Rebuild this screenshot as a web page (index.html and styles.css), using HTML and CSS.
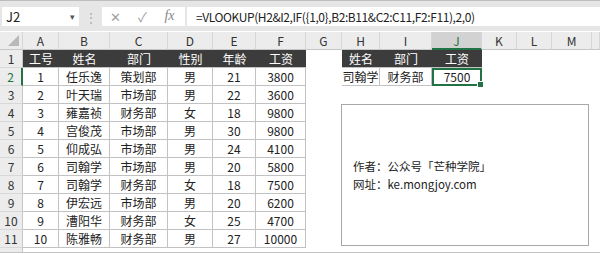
FILE: index.html
```html
<!DOCTYPE html>
<html lang="zh-CN">

<head>
    <meta charset="UTF-8">
    <title>VLOOKUP 多条件查找</title>
    <link rel="stylesheet" href="styles.css">
</head>

<body>
    <div class="window">
        <div class="formula-bar">
            <div class="name-box">
                <span>J2</span>
                <span class="caret">&#9662;</span>
            </div>
            <div class="grip">&#8942;</div>
            <div class="fx-buttons">
                <span class="btn">&#10005;</span>
                <span class="btn">&#10003;</span>
                <span class="btn fx">fx</span>
            </div>
            <div class="formula">=VLOOKUP(H2&amp;I2,IF({1,0},B2:B11&amp;C2:C11,F2:F11),2,0)</div>
        </div>

        <div class="sheet">
            <div class="row heads">
                <div class="corner"><span class="tri"></span></div>
                <div class="ch ca">A</div>
                <div class="ch cb">B</div>
                <div class="ch cc">C</div>
                <div class="ch cd">D</div>
                <div class="ch ce">E</div>
                <div class="ch cf">F</div>
                <div class="ch cg">G</div>
                <div class="ch chh">H</div>
                <div class="ch ci">I</div>
                <div class="ch cj active">J</div>
                <div class="ch ck">K</div>
                <div class="ch cl">L</div>
                <div class="ch cm">M</div>
                <div class="ch rest"></div>
            </div>

            <div class="row">
                <div class="rh">1</div>
                <div class="c ca dark">工号</div>
                <div class="c cb dark">姓名</div>
                <div class="c cc dark">部门</div>
                <div class="c cd dark">性别</div>
                <div class="c ce dark">年龄</div>
                <div class="c cf dark">工资</div>
                <div class="c cg"></div>
                <div class="c chh dark">姓名</div>
                <div class="c ci dark">部门</div>
                <div class="c cj dark">工资</div>
            </div>
            <div class="row">
                <div class="rh active">2</div>
                <div class="c ca b">1</div>
                <div class="c cb b">任乐逸</div>
                <div class="c cc b">策划部</div>
                <div class="c cd b">男</div>
                <div class="c ce b">21</div>
                <div class="c cf b">3800</div>
                <div class="c cg"></div>
                <div class="c chh b">司翰学</div>
                <div class="c ci b">财务部</div>
                <div class="c cj b selected">7500<span class="handle"></span></div>
            </div>
            <div class="row">
                <div class="rh">3</div>
                <div class="c ca b">2</div>
                <div class="c cb b">叶天瑞</div>
                <div class="c cc b">市场部</div>
                <div class="c cd b">男</div>
                <div class="c ce b">22</div>
                <div class="c cf b">3600</div>
            </div>
            <div class="row">
                <div class="rh">4</div>
                <div class="c ca b">3</div>
                <div class="c cb b">雍嘉祯</div>
                <div class="c cc b">财务部</div>
                <div class="c cd b">女</div>
                <div class="c ce b">18</div>
                <div class="c cf b">9800</div>
            </div>
            <div class="row">
                <div class="rh">5</div>
                <div class="c ca b">4</div>
                <div class="c cb b">宫俊茂</div>
                <div class="c cc b">市场部</div>
                <div class="c cd b">男</div>
                <div class="c ce b">30</div>
                <div class="c cf b">9800</div>
            </div>
            <div class="row">
                <div class="rh">6</div>
                <div class="c ca b">5</div>
                <div class="c cb b">仰成弘</div>
                <div class="c cc b">市场部</div>
                <div class="c cd b">男</div>
                <div class="c ce b">24</div>
                <div class="c cf b">4100</div>
            </div>
            <div class="row">
                <div class="rh">7</div>
                <div class="c ca b">6</div>
                <div class="c cb b">司翰学</div>
                <div class="c cc b">市场部</div>
                <div class="c cd b">男</div>
                <div class="c ce b">20</div>
                <div class="c cf b">5800</div>
            </div>
            <div class="row">
                <div class="rh">8</div>
                <div class="c ca b">7</div>
                <div class="c cb b">司翰学</div>
                <div class="c cc b">财务部</div>
                <div class="c cd b">女</div>
                <div class="c ce b">18</div>
                <div class="c cf b">7500</div>
            </div>
            <div class="row">
                <div class="rh">9</div>
                <div class="c ca b">8</div>
                <div class="c cb b">伊宏远</div>
                <div class="c cc b">市场部</div>
                <div class="c cd b">男</div>
                <div class="c ce b">20</div>
                <div class="c cf b">6200</div>
            </div>
            <div class="row">
                <div class="rh">10</div>
                <div class="c ca b">9</div>
                <div class="c cb b">漕阳华</div>
                <div class="c cc b">财务部</div>
                <div class="c cd b">女</div>
                <div class="c ce b">25</div>
                <div class="c cf b">4700</div>
            </div>
            <div class="row">
                <div class="rh">11</div>
                <div class="c ca b">10</div>
                <div class="c cb b">陈雅畅</div>
                <div class="c cc b">财务部</div>
                <div class="c cd b">男</div>
                <div class="c ce b">27</div>
                <div class="c cf b">10000</div>
            </div>
            <div class="row">
                <div class="rh">12</div>
            </div>

            <!-- floating text box drawn over the grid -->
            <div class="textbox">
                <p>作者：公众号「芒种学院」</p>
                <p>网址：ke.mongjoy.com</p>
            </div>
        </div>
    </div>
</body>

</html>
```

FILE: styles.css
```css
body {
    margin: 0;
    padding: 0;
    background-color: #fff;
    font-family: "Noto Sans CJK SC", "Noto Sans", sans-serif;
    color: #222;
}

.window {
    position: relative;
    width: 600px;
    height: 253px;
    overflow: hidden;
    box-sizing: border-box;
    border-top: 1px solid #bdbdbd;
    border-bottom: 1px solid #c4c4c4;
}

/* formula bar */
.formula-bar {
    display: flex;
    align-items: center;
    height: 30px;
    background-color: #e6e6e6;
    box-sizing: border-box;
}

.name-box {
    display: flex;
    align-items: center;
    justify-content: space-between;
    width: 77px;
    height: 19px;
    margin-left: 2px;
    padding: 0 4px 0 4px;
    box-sizing: border-box;
    background-color: #fff;
    font-size: 13px;
}

.caret {
    font-size: 9px;
    color: #555;
}

.grip {
    width: 23px;
    text-align: center;
    color: #aaa;
    font-size: 12px;
}

.fx-buttons {
    display: flex;
    align-items: center;
    width: 83px;
    height: 19px;
    background-color: #fff;
}

.fx-buttons .btn {
    width: 27px;
    text-align: center;
    color: #a0a0a0;
    font-size: 13px;
}

.fx-buttons .fx {
    font-family: "Liberation Serif", serif;
    font-style: italic;
    font-size: 14px;
    color: #888;
}

.formula {
    flex: 1;
    height: 19px;
    margin-left: 2px;
    padding-left: 9px;
    background-color: #fff;
    font-size: 12px;
    letter-spacing: -0.4px;
    line-height: 19px;
    white-space: nowrap;
}

/* sheet */
.sheet {
    padding-top: 1px;
}

.row {
    display: flex;
    height: 18px;
}

.row > div {
    flex: none;
    box-sizing: border-box;
    height: 18px;
    font-size: 12px;
    line-height: 17px;
    text-align: center;
}

.corner, .rh {
    width: 23px;
}

.ca { width: 36px; }
.cb { width: 51px; }
.cc { width: 58px; }
.cd { width: 45px; }
.ce { width: 43px; }
.cf { width: 50px; }
.cg { width: 36px; }
.chh { width: 38px; }
.ci { width: 52px; }
.cj { width: 50px; }
.ck { width: 35px; }
.cl { width: 35px; }
.cm { width: 40px; }
.rest { flex: 1 !important; }

.heads > div {
    background-color: #ececec;
    border-right: 1px solid #d6d6d6;
    border-bottom: 1px solid #c6c6c6;
    color: #333;
}

.corner {
    position: relative;
}

.tri {
    position: absolute;
    right: 3px;
    bottom: 3px;
    width: 0;
    height: 0;
    border-left: 11px solid transparent;
    border-bottom: 11px solid #b8b8b8;
}

.heads .active {
    background-color: #d2d2d2;
    color: #217346;
    border-bottom: 2px solid #217346;
}

.rh {
    background-color: #ececec;
    border-right: 1px solid #c6c6c6;
    border-bottom: 1px solid #d8d8d8;
    color: #333;
}

.rh.active {
    color: #217346;
    border-right: 2px solid #217346;
}

.c.b {
    border-right: 1px solid #c2c2c2;
    border-bottom: 1px solid #c2c2c2;
}

.c.dark {
    background-color: #3c3c3c;
    color: #fff;
    border-bottom: 1px solid #c2c2c2;
}

.selected {
    position: relative;
    border: 2px solid #217346 !important;
    line-height: 14px !important;
}

.handle {
    position: absolute;
    right: -4px;
    bottom: -4px;
    width: 5px;
    height: 5px;
    background-color: #217346;
    border: 1px solid #fff;
}

/* text box */
.textbox {
    position: absolute;
    left: 341px;
    top: 103px;
    width: 248px;
    height: 142px;
    box-sizing: border-box;
    padding-left: 11px;
    border: 1px solid #a8a8a8;
    background-color: #fff;
    display: flex;
    flex-direction: column;
    justify-content: center;
    font-size: 11.5px;
    line-height: 18px;
    color: #222;
}

.textbox p {
    margin: 0;
}
```
